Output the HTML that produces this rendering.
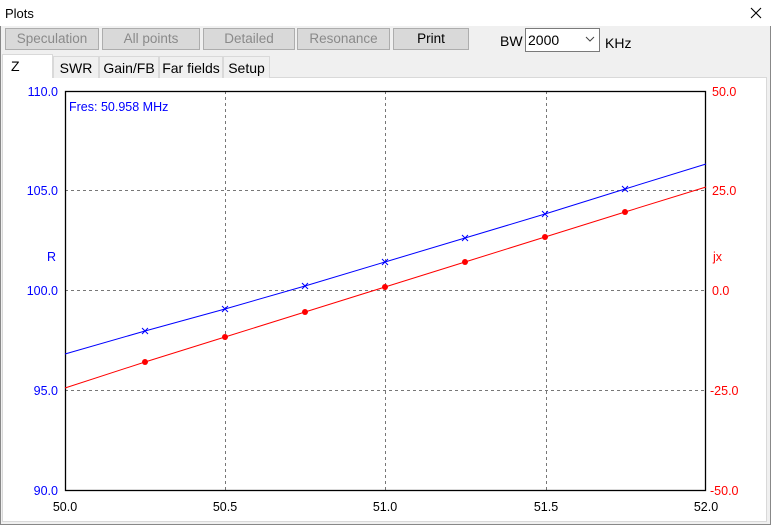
<!DOCTYPE html>
<html><head><style>
body{margin:0;width:771px;height:525px;background:#f0f0f0;font-family:"Liberation Sans",sans-serif;position:relative;overflow:hidden}
.frame{position:absolute;left:0;top:0;width:769px;height:523px;border:1px solid #888;background:#f0f0f0}
.title{position:absolute;left:0;top:0;width:771px;height:26px;background:#fff}
.btn{position:absolute;top:28px;height:22px;background:#d9d9d9;border:1px solid #adadad;box-sizing:border-box;font-size:13.5px;color:#8a8a8a;text-align:center;line-height:20px}
.tab{position:absolute;top:56px;height:22px;border:1px solid #d9d9d9;border-bottom:none;box-sizing:border-box;font-size:14px;line-height:22px;text-align:center;background:#f0f0f0}
.t{position:absolute;font-size:12px;white-space:nowrap}
</style></head><body>
<div class="frame"></div>
<div class="title"></div>
<div class="t" style="left:5px;top:6px;font-size:13px">Plots</div>
<svg style="position:absolute;left:750px;top:7px" width="12" height="12"><path d="M1 1L11 11M11 1L1 11" stroke="#000" stroke-width="1.1"/></svg>
<div class="btn" style="left:5px;width:94px">Speculation</div>
<div class="btn" style="left:102px;width:98px">All points</div>
<div class="btn" style="left:203px;width:92px">Detailed</div>
<div class="btn" style="left:297px;width:93px">Resonance</div>
<div class="btn" style="left:393px;width:76px;color:#000">Print</div>
<div class="t" style="left:500px;top:33px;font-size:14px">BW</div>
<div style="position:absolute;left:525px;top:28px;width:75px;height:24px;border:1px solid #7a7a7a;background:#fff;box-sizing:border-box"></div>
<div class="t" style="left:528px;top:32px;font-size:14px">2000</div>
<svg style="position:absolute;left:585px;top:36px" width="10" height="6"><path d="M1 1l4 4 4-4" stroke="#444" fill="none"/></svg>
<div class="t" style="left:605px;top:35px;font-size:14px">KHz</div>
<div style="position:absolute;left:2px;top:77px;width:765px;height:445px;background:#fff;border:1px solid #d9d9d9;box-sizing:border-box"></div>
<div class="tab" style="left:2px;top:54px;width:51px;height:24px;background:#fff;text-align:left;padding-left:8px">Z</div>
<div class="tab" style="left:53px;width:46px">SWR</div>
<div class="tab" style="left:99px;width:60px">Gain/FB</div>
<div class="tab" style="left:159px;width:64px">Far fields</div>
<div class="tab" style="left:223px;width:47px">Setup</div>
<svg style="position:absolute;left:0;top:0" width="771" height="525" font-family="Liberation Sans" font-size="12.5">
<g stroke="#777" stroke-dasharray="3,3" stroke-width="1">
<line x1="225.5" y1="91" x2="225.5" y2="490"/><line x1="385.5" y1="91" x2="385.5" y2="490"/><line x1="546.5" y1="91" x2="546.5" y2="490"/>
<line x1="65" y1="190.5" x2="706" y2="190.5"/><line x1="65" y1="290.5" x2="706" y2="290.5"/><line x1="65" y1="390.5" x2="706" y2="390.5"/>
</g>
<rect x="65.5" y="91.5" width="640" height="399" fill="none" stroke="#000" stroke-width="1.3"/>
<polyline fill="none" stroke="#00f" points="65,354 145,331 225,309 305,286 385,262 465,238 545,214 625,189 706,164"/>
<polyline fill="none" stroke="#f00" points="65,388 145,362 225,337 305,312 385,287 465,262 545,237 625,212 706,187"/>
<g stroke="#00f"><path d="M142 328l6 6M148 328l-6 6M222 306l6 6M228 306l-6 6M302 283l6 6M308 283l-6 6M382 259l6 6M388 259l-6 6M462 235l6 6M468 235l-6 6M542 211l6 6M548 211l-6 6M622 186l6 6M628 186l-6 6"/></g>
<g fill="#f00"><circle cx="145" cy="362" r="3"/><circle cx="225" cy="337" r="3"/><circle cx="305" cy="312" r="3"/><circle cx="385" cy="287" r="3"/><circle cx="465" cy="262" r="3"/><circle cx="545" cy="237" r="3"/><circle cx="625" cy="212" r="3"/></g>
<g fill="#00f" text-anchor="end"><text x="58" y="96">110.0</text><text x="58" y="195">105.0</text><text x="58" y="295">100.0</text><text x="58" y="395">95.0</text><text x="58" y="495">90.0</text><text x="56" y="261">R</text></g>
<text x="69" y="111" fill="#00f">Fres: 50.958 MHz</text>
<g fill="#f00"><text x="712" y="96">50.0</text><text x="712" y="195">25.0</text><text x="712" y="295">0.0</text><text x="710" y="395">-25.0</text><text x="710" y="495">-50.0</text><text x="713" y="261">jx</text></g>
<g fill="#000" text-anchor="middle"><text x="65" y="511">50.0</text><text x="225" y="511">50.5</text><text x="385" y="511">51.0</text><text x="546" y="511">51.5</text><text x="706" y="511">52.0</text></g>
</svg>
</body></html>
